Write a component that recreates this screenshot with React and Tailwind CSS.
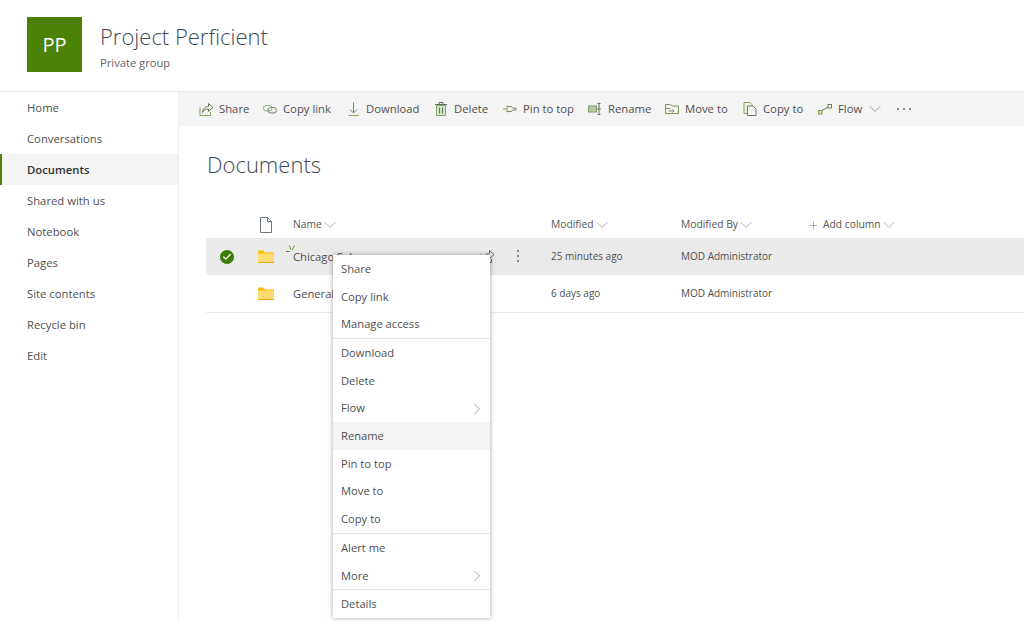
import { Check, ChevronDown, ChevronRight, Plus } from 'lucide-react';

const FONT = "font-['Open_Sans',sans-serif]";
const navItems = ['Home', 'Conversations', 'Documents', 'Shared with us', 'Notebook', 'Pages', 'Site contents', 'Recycle bin', 'Edit'];

const Ico = ({ children, w = 14, h = 14 }) => (
  <svg width={w} height={h} viewBox={`0 0 ${w} ${h}`} fill="none" stroke="#5c8a3a" strokeWidth="1" className="shrink-0">
    {children}
  </svg>
);

const ShareIcon = () => (
  <Ico>
    <path d="M1 5.500v8h10.500V10" stroke="#7fa35f" />
    <path d="M3.500 10.500c.3-3.800 2.700-6 6-6V1.500l4.500 4-4.500 4V7c-2.700 0-4.700 1-6 3.500z" stroke="#66745c" />
  </Ico>
);
const LinkIcon = () => (
  <Ico>
    <rect x="0.500" y="3.500" width="8.500" height="5.500" rx="2.750" stroke="#8bab6c" />
    <rect x="5" y="5.500" width="8.500" height="5.500" rx="2.750" stroke="#76866c" />
  </Ico>
);
const DownloadIcon = () => (
  <Ico w={13}>
    <path d="M6.500 0.500v10M3 7.500 6.500 11 10 7.500" stroke="#76866c" />
    <path d="M1.500 13.500h10" stroke="#8aa85c" />
  </Ico>
);
const TrashIcon = () => (
  <Ico>
    <path d="M2.500 3.500h9v10h-9z" stroke="#7da868" fill="#d5e3cb" />
    <path d="M1 2.500h12M5 2V.500h4V2M5.500 5.500v6M8.500 5.500v6" stroke="#5f7558" />
  </Ico>
);
const PinIcon = () => (
  <Ico>
    <path d="M0 7h4M4 3.500v7" stroke="#8aa85c" />
    <path d="M4 4.500h4.500l1 1.500h3.500v2H9.500l-1 1.500H4" stroke="#7d8a68" />
  </Ico>
);
const RenameIcon = () => (
  <Ico>
    <rect x="0.500" y="4" width="8" height="6" fill="#b5caa1" stroke="#7f9a66" />
    <path d="M11 1.500v11M9.500 1.500h3M9.500 12.500h3M9 7h4" stroke="#66745c" />
  </Ico>
);
const FolderMoveIcon = () => (
  <Ico>
    <path d="M.500 2.500h5l1.500 1.500h6.500v7.500H.500z" stroke="#7c9458" />
    <path d="M.500 6.500h5M3.500 9h5.500M7.500 7.500 9 9l-1.500 1.500" stroke="#7c9458" />
  </Ico>
);
const CopyIcon = () => (
  <Ico>
    <path d="M1 .500h6l2 2v9H1z" stroke="#7fa35f" fill="#eef3e8" />
    <path d="M4.500 4h5.500l3 3v6.500H4.500z" stroke="#6d7f62" fill="#f4f4f4" />
  </Ico>
);
const FlowIcon = () => (
  <Ico>
    <rect x="0.500" y="8.500" width="3.500" height="3.500" stroke="#7fa04f" fill="#c9d9b0" />
    <rect x="10" y="2.500" width="3.500" height="3.500" stroke="#6d7f62" />
    <path d="M4 8.500 10 5" stroke="#6d7f62" />
  </Ico>
);

const commands = [
  { label: 'Share', icon: <ShareIcon />, w: 'w-[64px]' },
  { label: 'Copy link', icon: <LinkIcon />, w: 'w-[84px]' },
  { label: 'Download', icon: <DownloadIcon />, w: 'w-[87px]' },
  { label: 'Delete', icon: <TrashIcon />, w: 'w-[69px]' },
  { label: 'Pin to top', icon: <PinIcon />, w: 'w-[85px]' },
  { label: 'Rename', icon: <RenameIcon />, w: 'w-[77px]' },
  { label: 'Move to', icon: <FolderMoveIcon />, w: 'w-[78px]' },
  { label: 'Copy to', icon: <CopyIcon />, w: 'w-[75px]' },
];

const menuGroups = [
  ['Share', 'Copy link', 'Manage access'],
  ['Download', 'Delete', 'Flow', 'Rename', 'Pin to top', 'Move to', 'Copy to'],
  ['Alert me', 'More'],
  ['Details'],
];

const Folder = () => (
  <svg width="16" height="13" viewBox="0 0 16 13" className="shrink-0">
    <path d="M0 1.500a1 1 0 0 1 1-1h4l2 2h9v10H0z" fill="#ffb900" />
    <path d="M0 3.500h16v9H0z" fill="#ffdc73" />
    <path d="M0 12h16v1H0z" fill="#eea81f" />
  </svg>
);

const ContextMenu = () => (
  <div className="absolute left-[333px] top-[255px] z-10 w-[157px] bg-white shadow-[0_0_5px_rgba(0,0,0,0.35)]">
    {menuGroups.map((group, i) => (
      <div key={i} className={i > 0 ? 'border-t border-[#e3e3e3]' : ''}>
        {group.map((item) => (
          <div
            key={item}
            className={`flex h-[27.7px] items-center justify-between pl-2 pr-[8px] pt-[1px] text-[11.2px] text-[#505050] ${item === 'Rename' ? 'bg-[#f4f4f4]' : ''}`}
          >
            <span>{item}</span>
            {(item === 'Flow' || item === 'More') && <ChevronRight size={20} strokeWidth={0.8} className="-mr-[5px] text-[#777]" />}
          </div>
        ))}
      </div>
    ))}
  </div>
);

const Row = ({ name, modified, selected }) => (
  <div className={`flex items-center text-[#505050] ${selected ? 'h-[37px] bg-[#eaeaea]' : 'h-[38px] border-b border-[#eaeaea]'}`}>
    <div className="flex w-[42px] justify-center">
      {selected && (
        <span className="flex h-[14px] w-[14px] items-center justify-center rounded-full bg-[#3f7d0a]">
          <Check size={10} strokeWidth={3} className="text-white" />
        </span>
      )}
    </div>
    <div className="flex w-[45px] justify-start pl-[10px]"><Folder /></div>
    <div className="relative flex w-[258px] items-center pr-[29px] text-[11.2px]">
      {selected && (
        <svg width="10" height="10" viewBox="0 0 10 10" className="absolute left-[-7px] top-[-3px]" stroke="#5f9a2c" fill="none">
          <path d="M0 7.500h4M4.500 5.500 3.500 1.500M6 6 8.500 1.500" />
        </svg>
      )}
      <span className="flex-1 pt-[2px]">{name}</span>
      {selected && (
        <>
          <svg width="14" height="14" viewBox="0 0 14 14" fill="none" stroke="#666" className="mr-[20px]">
            <path d="M1 5.500v8h10.500V10M3.500 10.500c.3-3.800 2.700-6 6-6V1.500l4.500 4-4.500 4V7c-2.700 0-4.700 1-6 3.500z" />
          </svg>
          <span className="flex w-[8px] flex-col items-center gap-[3px]">
            <span className="h-[2px] w-[2px] rounded-full bg-[#666]" />
            <span className="h-[2px] w-[2px] rounded-full bg-[#666]" />
            <span className="h-[2px] w-[2px] rounded-full bg-[#666]" />
          </span>
        </>
      )}
    </div>
    <div className="w-[130px] text-[10px]">{modified}</div>
    <div className="text-[10px]">MOD Administrator</div>
  </div>
);

const SortChevron = () => <ChevronDown size={20} strokeWidth={0.8} className="-ml-[3px] text-[#888]" />;

export default function App() {
  return (
    <div className={`${FONT} h-[621px] w-[1024px] overflow-hidden bg-white`}>
      <header className="flex h-[92px] items-start border-b border-[#eeeeee] pl-[27px] pt-[17px]">
        <div className="flex h-[55px] w-[55px] items-center justify-center bg-[#498205] text-[20px] text-white">PP</div>
        <div className="ml-[18px]">
          <div className="mt-[2px] text-[22px] font-light leading-[34px] text-[#3f4a55]">Project Perficient</div>
          <div className="mt-[2px] text-[11.2px] leading-[15px] text-[#666]">Private group</div>
        </div>
      </header>

      <div className="relative flex h-[529px]">
        <nav className="w-[179px] shrink-0 border-r border-[#eeeeee]">
          {navItems.map((item) => (
            <div
              key={item}
              className={`flex h-[31px] items-center pt-[2px] text-[11.3px] ${item === 'Documents' ? 'border-l-2 border-[#498205] bg-[#f4f4f4] pl-[25px] font-semibold text-[#333]' : 'pl-[27px] text-[#505050]'}`}
            >
              {item}
            </div>
          ))}
        </nav>

        <main className="min-w-0 flex-1">
          <div className="flex h-[34px] items-center bg-[#f4f4f4] pl-[20px] text-[11.3px] text-[#505050]">
            {commands.map((c) => (
              <div key={c.label} className={`flex ${c.w} shrink-0 items-center gap-[6px]`}>
                {c.icon}
                <span>{c.label}</span>
              </div>
            ))}
            <div className="flex items-center gap-[6px]">
              <FlowIcon />
              <span>Flow</span>
              <ChevronDown size={20} strokeWidth={0.8} className="-ml-[3px] text-[#777]" />
            </div>
            <div className="ml-[12px] flex gap-[4px]">
              <span className="h-[2px] w-[2px] rounded-full bg-[#666]" />
              <span className="h-[2px] w-[2px] rounded-full bg-[#666]" />
              <span className="h-[2px] w-[2px] rounded-full bg-[#666]" />
            </div>
          </div>

          <div className="pl-[27px]">
            <h1 className="mt-[22px] pl-[1px] text-[22px] font-light leading-[32px] text-[#3f4a55]">Documents</h1>
            <div className="mt-[30px] flex h-[28px] items-center pt-[2px] text-[10.3px] text-[#555]">
              <div className="w-[42px]" />
              <div className="w-[45px] pl-[11px]">
                <svg width="14" height="16" viewBox="0 0 14 16" fill="none" stroke="#6b7280">
                  <path d="M1.500.500h7l4 4v11h-11zM8.500.500v4h4" />
                </svg>
              </div>
              <div className="flex w-[258px] items-center gap-[1px]">Name <SortChevron /></div>
              <div className="flex w-[130px] items-center gap-[1px]">Modified <SortChevron /></div>
              <div className="flex w-[128px] items-center gap-[1px]">Modified By <SortChevron /></div>
              <div className="flex items-center gap-[1px]"><Plus size={11} strokeWidth={1} className="-ml-[1px] mr-[3px]" /> Add column <SortChevron /></div>
            </div>
            <Row name="Chicago Sales" modified="25 minutes ago" selected />
            <Row name="General" modified="6 days ago" />
          </div>
        </main>
      </div>

      <ContextMenu />
    </div>
  );
}
